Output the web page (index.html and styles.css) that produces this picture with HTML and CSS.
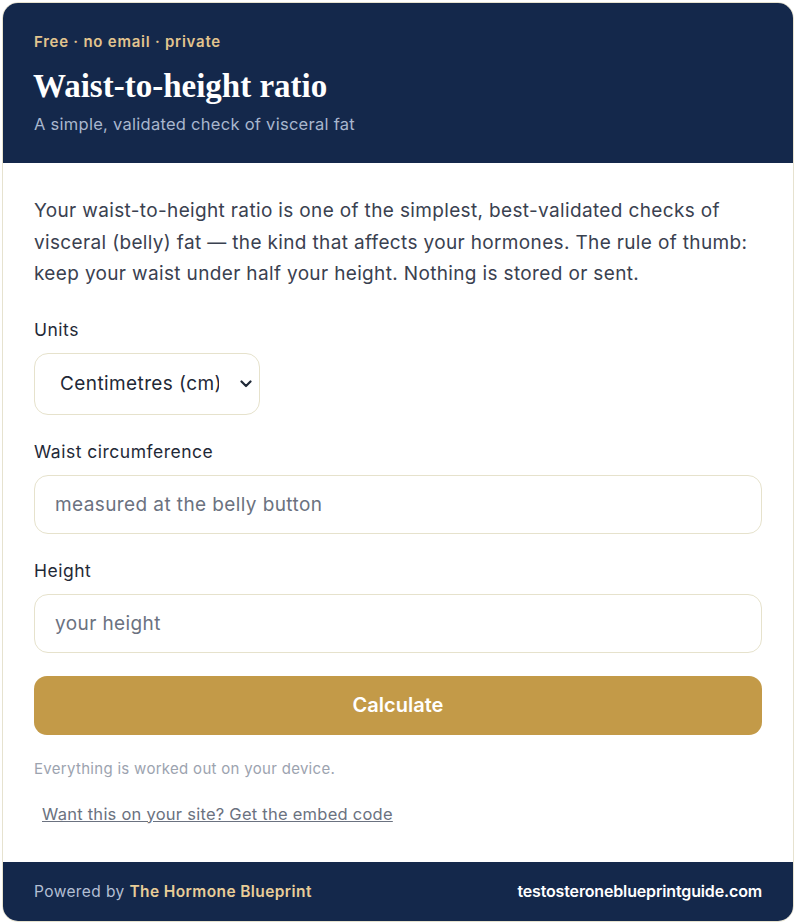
FILE: index.html
```html
<!DOCTYPE html>
<html>
<head>
    <title>Waist-to-height ratio</title>
    <link rel="stylesheet" href="styles.css">
</head>
<body>
    <div class="card">
        <div class="card-head">
            <div class="eyebrow">Free · no email · private</div>
            <h1>Waist-to-height ratio</h1>
            <div class="subtitle">A simple, validated check of visceral fat</div>
        </div>

        <div class="card-body">
            <p class="intro">Your waist-to-height ratio is one of the simplest, best-validated checks of visceral (belly) fat — the kind that affects your hormones. The rule of thumb: keep your waist under half your height. Nothing is stored or sent.</p>

            <div class="field">
                <label for="units">Units</label>
                <div class="select-wrap">
                    <select id="units">
                        <option>Centimetres (cm)</option>
                        <option>Inches (in)</option>
                    </select>
                    <svg class="chevron" width="12" height="8" viewBox="0 0 12 8"><path d="M1.5 1.5 L6 6 L10.5 1.5" fill="none" stroke="#1f2937" stroke-width="2.2" stroke-linecap="round" stroke-linejoin="round"/></svg>
                </div>
            </div>

            <div class="field">
                <label for="waist">Waist circumference</label>
                <input type="text" id="waist" placeholder="measured at the belly button">
            </div>

            <div class="field field-last">
                <label for="height">Height</label>
                <input type="text" id="height" placeholder="your height">
            </div>

            <button id="calcButton">Calculate</button>

            <p class="note">Everything is worked out on your device.</p>
            <a class="embed-link" href="#">Want this on your site? Get the embed code</a>
        </div>

        <div class="card-foot">
            <span class="powered">Powered by <b>The Hormone Blueprint</b></span>
            <span class="site">testosteroneblueprintguide.com</span>
        </div>
    </div>
</body>
</html>
```

FILE: styles.css
```css
body {
    font-family: Inter, "Noto Sans", Arial, sans-serif;
    background-color: #ffffff;
    margin: 0;
    padding: 2px;
}

.card {
    width: 790px;
    border: 1px solid #e6e2cf;
    border-radius: 16px;
    overflow: hidden;
    background: #fff;
}

.card-head {
    background-color: #14284b;
    padding: 29px 31px 28px;
}

.eyebrow {
    color: #e2c48e;
    font-size: 15px;
    line-height: 20px;
    letter-spacing: 0.75px;
    font-weight: 600;
}

h1 {
    font-family: "Liberation Serif", "DejaVu Serif", serif;
    color: #ffffff;
    font-size: 33px;
    line-height: 38px;
    font-weight: 700;
    margin: 15px 0 8px -1px;
}

.subtitle {
    color: #a9b7ce;
    font-size: 16.5px;
    line-height: 22px;
    letter-spacing: 0.27px;
}

.card-body {
    padding: 32px 31px 37px;
}

.intro {
    color: #3a4150;
    font-size: 19px;
    letter-spacing: 0.35px;
    line-height: 31.5px;
    margin: 0 0 28px;
}

.field {
    margin-bottom: 25px;
}

.field-last {
    margin-bottom: 23px;
}

label {
    display: block;
    color: #1f2937;
    font-size: 17.5px;
    letter-spacing: 0.5px;
    line-height: 24px;
    margin-bottom: 11px;
}

.select-wrap {
    position: relative;
    width: 226px;
}

select {
    appearance: none;
    width: 226px;
    height: 62px;
    padding: 0 40px 0 25px;
    font-family: inherit;
    font-size: 19px;
    letter-spacing: 0.4px;
    color: #1f2937;
    background: #fff;
    border: 1px solid #e6e2cc;
    border-radius: 14px;
}

.chevron {
    position: absolute;
    right: 8px;
    top: 27px;
}

input[type="text"] {
    width: 100%;
    height: 59px;
    padding: 0 20px;
    font-family: inherit;
    font-size: 19px;
    letter-spacing: 0.4px;
    color: #1f2937;
    border: 1px solid #e6e2cc;
    border-radius: 14px;
    box-sizing: border-box;
}

input::placeholder {
    color: #6b7280;
}

button {
    width: 100%;
    height: 59px;
    background: #c39a48;
    color: #ffffff;
    font-family: inherit;
    font-size: 20px;
    font-weight: 600;
    border: none;
    border-radius: 13px;
    cursor: pointer;
}

.note {
    color: #9ca3af;
    font-size: 15px;
    letter-spacing: 0.3px;
    line-height: 19px;
    margin: 24px 0 26px;
}

.embed-link {
    display: inline-block;
    margin-left: 8px;
    color: #6b7280;
    font-size: 16.5px;
    letter-spacing: 0.25px;
    line-height: 21px;
    text-decoration: underline;
}

.card-foot {
    background-color: #14284b;
    display: flex;
    justify-content: space-between;
    align-items: center;
    height: 59px;
    padding: 0 31px;
}

.powered {
    color: #b3bfd3;
    font-size: 15.5px;
    letter-spacing: 0.4px;
}

.powered b {
    color: #e8cd98;
    font-weight: 600;
}

.site {
    color: #ffffff;
    font-weight: 600;
    font-size: 16px;
    letter-spacing: -0.15px;
}
```
